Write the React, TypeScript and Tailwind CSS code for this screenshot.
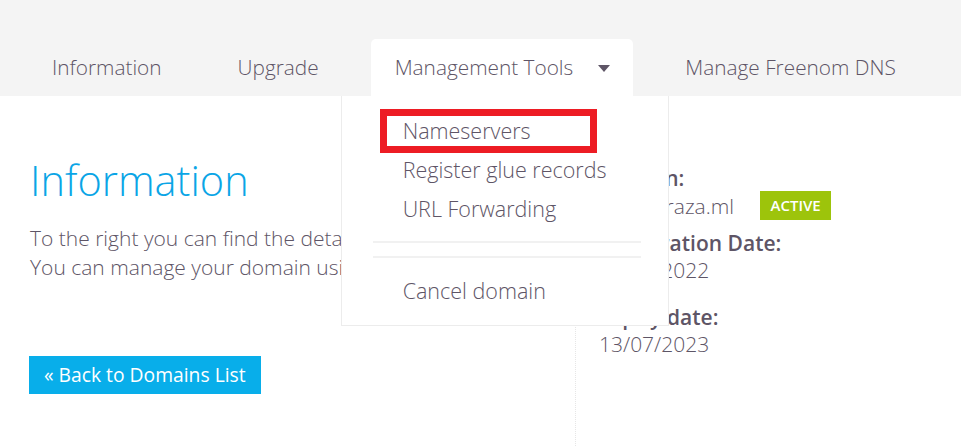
const tabs = ["Information", "Upgrade", "Management Tools", "Manage Freenom DNS"];

function Caret() {
  return (
    <svg width="12" height="7" viewBox="0 0 12 7" className="ml-[25px] mt-[2px]">
      <path d="M0 0 L12 0 L6 7 Z" fill="#5e5566" />
    </svg>
  );
}

function ManagementMenu() {
  return (
    <div className="absolute left-[-30px] top-full z-10 w-[328px] h-[230px] bg-white border border-[#ececec] border-t-0">
      <div className="absolute left-[38px] top-[13px] w-[217px] h-[44px] border-[7px] border-[#ed1c24]" />
      <ul className="pt-[15px] pl-[61px] text-[21.5px] text-[#5e5566] leading-[39px]">
        <li>Nameservers</li>
        <li>Register glue records</li>
        <li>URL Forwarding</li>
      </ul>
      <div className="ml-[31px] mr-[27px] mt-[13px] h-[2px] bg-[#f1f1f1]" />
      <div className="ml-[31px] mr-[27px] mt-[13px] h-[2px] bg-[#f1f1f1]" />
      <div className="pl-[61px] mt-[13px] text-[21.5px] text-[#5e5566] leading-[39px]">Cancel domain</div>
    </div>
  );
}

export default function App() {
  return (
    <div className="w-[961px] h-[446px] overflow-hidden bg-white text-[#5e5566]" style={{ fontFamily: '"Open Sans", sans-serif' }}>
      <div className="h-[96px] bg-[#f4f4f4] pt-[39px] pl-[28px]">
        <ul className="flex gap-[28px] h-[57px]">
          {tabs.map(t => {
            const active = t === "Management Tools";
            return (
              <li
                key={t}
                className={`relative flex items-center h-full text-[20.8px] font-light ${active ? "bg-white rounded-t-[5px] pl-6 pr-[23px]" : "px-6"}`}
              >
                <span>{t}</span>
                {active && <Caret />}
                {active && <ManagementMenu />}
              </li>
            );
          })}
        </ul>
      </div>

      <div className="flex h-[350px]">
        <div className="w-[576px] shrink-0 border-r border-dotted border-[#e6e6e6] pl-[29px] pt-[58px]">
          <h1 className="ml-px text-[41.5px] leading-[52px] font-light text-[#0aa5e6]">Information</h1>
          <p className="ml-px mt-[18px] text-[21px] leading-[29px] font-light whitespace-nowrap">
            To the right you can find the details of your domain.
            <br />
            You can manage your domain using the tabs above.
          </p>
          <button className="mt-[74px] h-[38px] px-[15px] bg-[#08aeea] text-white text-[19.3px] leading-[38px]">
            « Back to Domains List
          </button>
        </div>

        <div className="pl-[23px] pt-[69px] text-[21px]">
          <div className="font-semibold leading-[26px]">Domain:</div>
          <div className="flex items-center leading-[28px] font-light">
            <span>hassanraza.ml</span>
            <span className="ml-[26px] h-[29px] px-[10.5px] bg-[#9dc40b] text-white text-[15px] font-semibold leading-[29px]">ACTIVE</span>
          </div>
          <div className="mt-[10px] font-semibold leading-[26px]">Registration Date:</div>
          <div className="leading-[28px] font-light">13/07/2022</div>
          <div className="mt-[20px] font-semibold leading-[26px]">Expiry date:</div>
          <div className="leading-[28px] font-light">13/07/2023</div>
        </div>
      </div>
    </div>
  );
}
